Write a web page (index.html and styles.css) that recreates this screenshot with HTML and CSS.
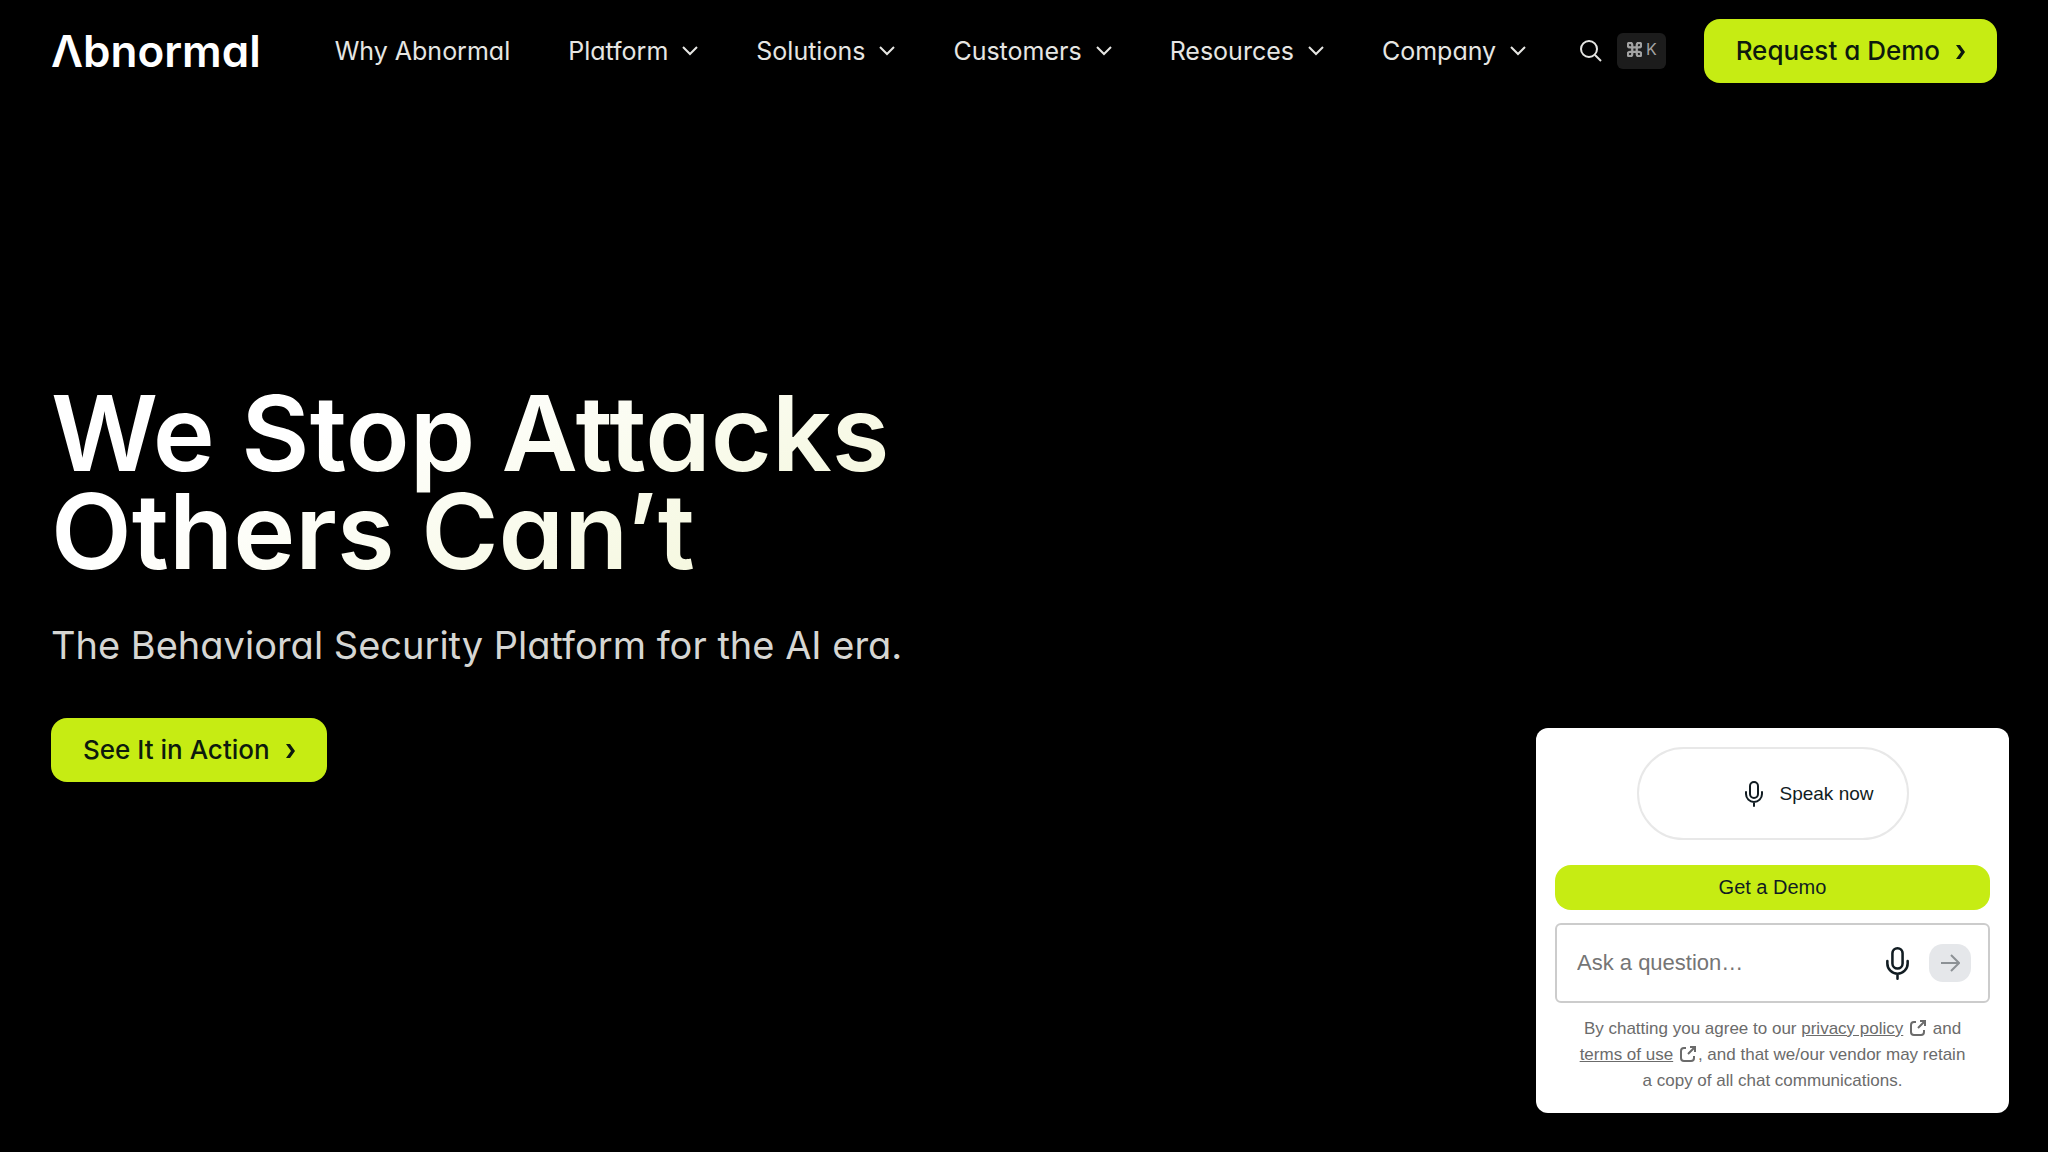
FILE: index.html
```html
<!DOCTYPE html>
<html lang="en">
<head>
  <meta charset="UTF-8">
  <meta name="viewport" content="width=device-width, initial-scale=1.0">
  <title>Abnormal</title>
  <link rel="stylesheet" href="styles.css">
</head>
<body>
  <header class="header">
    <a class="logo" href="#" aria-label="Abnormal">Λbnormal</a>
    <nav class="nav">
      <a class="nav-item" href="#">Why Abnormal</a>
      <button class="nav-item" type="button">Platform
        <svg class="chevron" viewBox="0 0 16 10"><path d="M1 1l7 7 7-7"/></svg>
      </button>
      <button class="nav-item" type="button">Solutions
        <svg class="chevron" viewBox="0 0 16 10"><path d="M1 1l7 7 7-7"/></svg>
      </button>
      <button class="nav-item" type="button">Customers
        <svg class="chevron" viewBox="0 0 16 10"><path d="M1 1l7 7 7-7"/></svg>
      </button>
      <button class="nav-item" type="button">Resources
        <svg class="chevron" viewBox="0 0 16 10"><path d="M1 1l7 7 7-7"/></svg>
      </button>
      <button class="nav-item" type="button">Company
        <svg class="chevron" viewBox="0 0 16 10"><path d="M1 1l7 7 7-7"/></svg>
      </button>
    </nav>
    <button class="search" type="button" aria-label="Search">
      <svg class="search-icon" viewBox="0 0 22 22"><circle cx="9" cy="9" r="8"/><path d="M15 15l6 6"/></svg>
      <span class="shortcut">
        <svg class="command-icon" viewBox="2 2 20 20"><path d="M15 6v12a3 3 0 1 0 3-3H6a3 3 0 1 0 3 3V6a3 3 0 1 0-3 3h12a3 3 0 1 0-3-3"/></svg>
        <kbd>K</kbd>
      </span>
    </button>
    <a class="button" href="#">Request a Demo
      <svg class="arrow" viewBox="0 0 10 16"><path d="M1 1h4l5 7-5 7H1l5-7z"/></svg>
    </a>
  </header>

  <main class="hero">
    <h1>We Stop Attacks<br>Others Can’t</h1>
    <p class="subtitle">The Behavioral Security Platform for the AI era.</p>
    <a class="button" href="#">See It in Action
      <svg class="arrow" viewBox="0 0 10 16"><path d="M1 1h4l5 7-5 7H1l5-7z"/></svg>
    </a>
  </main>

  <aside class="chat">
    <button class="speak" type="button">
      <svg class="mic" viewBox="0 0 18 26"><rect x="5" y="1" width="8" height="16" rx="4"/><path d="M1 11v2a8 8 0 0 0 16 0v-2M9 21v4"/></svg>
      Speak now
    </button>
    <button class="chat-demo" type="button">Get a Demo</button>
    <form class="ask">
      <input class="ask-input" type="text" placeholder="Ask a question…" aria-label="Ask a question">
      <button class="ask-mic" type="button" aria-label="Use microphone">
        <svg class="mic mic-large" viewBox="0 0 18 26"><rect x="5" y="1" width="8" height="16" rx="4"/><path d="M1 11v2a8 8 0 0 0 16 0v-2M9 21v4"/></svg>
      </button>
      <button class="ask-send" type="button" aria-label="Send">
        <svg class="send-icon" viewBox="0 0 20 18"><path d="M1 9h18M11 1l8 8-8 8"/></svg>
      </button>
    </form>
    <p class="legal">By chatting you agree to our <a href="#">privacy policy</a>
      <svg class="external" viewBox="0 0 16 16"><path d="M6 2H4a3 3 0 0 0-3 3v7a3 3 0 0 0 3 3h7a3 3 0 0 0 3-3v-2M10 1h5v5M15 1L8 8"/></svg>
      and <a href="#">terms of use</a>
      <svg class="external" viewBox="0 0 16 16"><path d="M6 2H4a3 3 0 0 0-3 3v7a3 3 0 0 0 3 3h7a3 3 0 0 0 3-3v-2M10 1h5v5M15 1L8 8"/></svg>, and that we/our vendor may retain a copy of all chat communications.</p>
  </aside>
</body>
</html>
```
FILE: styles.css
```css
* {
  box-sizing: border-box;
}

body {
  margin: 0;
  min-height: 100vh;
  display: flex;
  flex-direction: column;
  background-color: #000;
  color: #e6e6e3;
  font-family: Inter, sans-serif;
  font-feature-settings: "cv11";
}

a {
  color: inherit;
  text-decoration: none;
}

button {
  padding: 0;
  border: none;
  background: none;
  color: inherit;
  font: inherit;
  font-feature-settings: inherit;
  cursor: pointer;
}

svg {
  flex: none;
  fill: none;
  stroke: currentColor;
  stroke-width: 2;
}

.header {
  display: flex;
  align-items: center;
  padding: 19px 51px;
}

.logo {
  color: #fff;
  font-size: 44px;
  font-weight: 600;
  line-height: 64px;
}

.nav {
  display: flex;
  gap: 58px;
  margin-left: 74px;
  font-size: 25px;
  line-height: 32px;
}

.nav-item {
  display: flex;
  align-items: center;
  gap: 14px;
  white-space: nowrap;
}

.chevron {
  width: 16px;
  height: 10px;
}

.search {
  display: flex;
  align-items: center;
  gap: 15px;
  margin-left: auto;
  margin-right: 38px;
}

.search-icon {
  width: 22px;
  height: 22px;
}

.shortcut {
  display: flex;
  align-items: center;
  gap: 4px;
  height: 36px;
  padding: 0 9px 4px 10px;
  border-radius: 6px;
  background-color: #1c1c1c;
  color: #a3a3a3;
}

.command-icon {
  width: 15px;
  height: 15px;
  stroke-width: 3;
}

kbd {
  font-family: inherit;
  font-size: 16px;
}

.button {
  display: flex;
  align-items: center;
  gap: 15px;
  height: 64px;
  padding: 0 32px 2px;
  border-radius: 16px;
  background-color: #c6ec13;
  color: #0d1a0d;
  font-size: 26px;
  font-weight: 500;
  white-space: nowrap;
}

.arrow {
  width: 10px;
  height: 16px;
  margin-top: 4px;
  fill: currentColor;
  stroke: none;
}

.hero {
  display: flex;
  flex: 1;
  flex-direction: column;
  align-items: flex-start;
  justify-content: center;
  padding: 0 51px 88px;
}

h1 {
  margin: 0;
  background: linear-gradient(155deg, #fff 30%, #f4f7dc 90%);
  background-clip: text;
  color: transparent;
  font-size: 105px;
  font-weight: 600;
  line-height: 98px;
}

.subtitle {
  margin: 40px 0 48px;
  color: #d6d6d3;
  font-size: 38px;
  line-height: 50px;
}

.chat {
  position: fixed;
  right: 39px;
  bottom: 39px;
  width: 473px;
  padding: 19px;
  border-radius: 12px;
  background-color: #fff;
  color: #111c22;
  font-family: "Liberation Sans", Arial, sans-serif;
}

.speak {
  display: flex;
  align-items: center;
  justify-content: flex-end;
  gap: 16px;
  width: 272px;
  height: 93px;
  margin: 0 auto 25px;
  padding: 0 33px;
  border: 2px solid #e8e8e8;
  border-radius: 47px;
  font-size: 19px;
}

.mic {
  width: 18px;
  height: 26px;
  stroke-linecap: round;
}

.chat-demo {
  width: 100%;
  height: 45px;
  border-radius: 16px;
  background-color: #c6ec13;
  font-size: 20px;
}

.ask {
  display: flex;
  align-items: center;
  height: 80px;
  margin-top: 13px;
  padding: 0 17px 0 20px;
  border: 2px solid #ccc;
  border-radius: 6px;
}

.ask-input {
  flex: 1;
  min-width: 0;
  padding: 0;
  border: none;
  outline: none;
  font: 22px "Liberation Sans", Arial, sans-serif;
}

.ask-input::placeholder {
  color: #757575;
}

.ask-mic {
  display: flex;
  margin-right: 20px;
}

.mic-large {
  width: 23px;
  height: 33px;
}

.ask-send {
  display: grid;
  place-items: center;
  width: 42px;
  height: 38px;
  border-radius: 14px;
  background-color: #e5e7ea;
  color: #8c9195;
}

.send-icon {
  width: 20px;
  height: 18px;
}

.legal {
  margin: 13px 18px 0;
  color: #6b6b6b;
  font-size: 17px;
  line-height: 26px;
  text-align: center;
}

.legal a {
  text-decoration: underline;
}

.external {
  width: 16px;
  height: 16px;
  margin: 0 2px;
  vertical-align: -2px;
}
```
